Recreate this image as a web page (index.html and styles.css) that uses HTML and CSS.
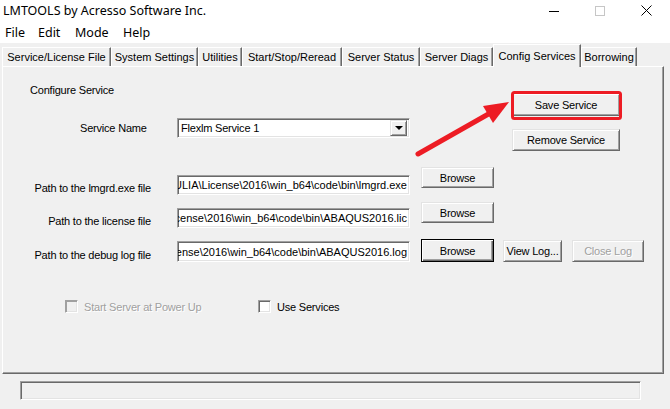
FILE: index.html
```html
<!DOCTYPE html>
<html>
<head>
<meta charset="utf-8">
<title>LMTOOLS</title>
<link rel="stylesheet" href="styles.css">
</head>
<body>
<div class="titlebar">
  <span class="title">LMTOOLS by Acresso Software Inc.</span>
  <div class="wincontrols">
    <span class="wc"><svg width="10" height="10" viewBox="0 0 10 10"><line x1="0" y1="5.5" x2="10" y2="5.5" stroke="#000" stroke-width="1"/></svg></span>
    <span class="wc"><svg width="10" height="10" viewBox="0 0 10 10"><rect x="0.5" y="0.5" width="9" height="9" fill="none" stroke="#c6c6c6" stroke-width="1"/></svg></span>
    <span class="wc"><svg width="11" height="11" viewBox="0 0 11 11"><path d="M0.5 0.5 L10.5 10.5 M10.5 0.5 L0.5 10.5" stroke="#000" stroke-width="1" fill="none"/></svg></span>
  </div>
</div>
<div class="menubar">
  <span class="m m-file">File</span>
  <span class="m m-edit">Edit</span>
  <span class="m m-mode">Mode</span>
  <span class="m">Help</span>
</div>
<div class="tabs">
  <div class="tab t1">Service/License File</div>
  <div class="tab t2">System Settings</div>
  <div class="tab t3">Utilities</div>
  <div class="tab t4">Start/Stop/Reread</div>
  <div class="tab t5">Server Status</div>
  <div class="tab t6">Server Diags</div>
  <div class="tab t7 active">Config Services</div>
  <div class="tab t8">Borrowing</div>
</div>
<div class="panel">
  <div class="top">
    <div class="top-left">
      <div class="heading">Configure Service</div>
      <div class="svc-row">
        <span class="svc-label">Service Name</span>
        <div class="combo field">
          <span class="combo-text">Flexlm Service 1</span>
          <span class="drop"><span class="tri"></span></span>
        </div>
      </div>
    </div>
    <div class="top-right">
      <div class="btn btn-wide save">Save Service</div>
      <div class="btn btn-wide remove">Remove Service</div>
    </div>
  </div>

  <div class="prow r1">
    <span class="plabel">Path to the lmgrd.exe file</span>
    <div class="pinput field"><span>SIMULIA\License\2016\win_b64\code\bin\lmgrd.exe</span></div>
    <div class="btn browse">Browse</div>
  </div>
  <div class="prow r2">
    <span class="plabel">Path to the license file</span>
    <div class="pinput field"><span>License\2016\win_b64\code\bin\ABAQUS2016.lic</span></div>
    <div class="btn browse">Browse</div>
  </div>
  <div class="prow r3">
    <span class="plabel">Path to the debug log file</span>
    <div class="pinput field"><span>License\2016\win_b64\code\bin\ABAQUS2016.log</span></div>
    <div class="btn browse default">Browse</div>
    <div class="btn viewlog">View Log...</div>
    <div class="btn closelog disabled">Close Log</div>
  </div>

  <div class="cbrow">
    <div class="cb cb1"><span class="box box-disabled"></span><span class="disabled-text">Start Server at Power Up</span></div>
    <div class="cb"><span class="box"></span><span>Use Services</span></div>
  </div>
</div>
<div class="statusbar"></div>

<svg class="annot" width="670" height="409" viewBox="0 0 670 409">
  <rect x="512.5" y="92.5" width="108" height="26" rx="2" fill="none" stroke="#ed1c24" stroke-width="3"/>
  <line x1="418" y1="154" x2="492" y2="112" stroke="#ed1c24" stroke-width="5" stroke-linecap="round"/>
  <polygon points="509,102 493,123 483,106" fill="#ed1c24"/>
</svg>
</body>
</html>
```
FILE: styles.css
```css
* { box-sizing: border-box; }
html, body { margin: 0; padding: 0; }
body {
  width: 670px;
  height: 409px;
  overflow: hidden;
  position: relative;
  background: #f0f0f0;
  font-family: "Liberation Sans", Arial, sans-serif;
  font-size: 11px;
  color: #000;
}

.titlebar {
  height: 21px;
  background: #fff;
  display: flex;
  align-items: center;
}
.title {
  font-family: "Noto Sans", sans-serif;
  font-size: 12.5px;
  padding-left: 3px;
}
.wincontrols {
  margin-left: auto;
  display: flex;
  height: 21px;
  padding-right: 1px;
}
.wc {
  width: 46px;
  display: flex;
  align-items: center;
  justify-content: center;
}
.wc svg { display: block; }

.menubar {
  height: 22px;
  background: #fff;
  display: flex;
  align-items: center;
  padding-left: 5px;
  font-family: "Noto Sans", sans-serif;
  font-size: 12.5px;
}
.m-file { width: 33px; }
.m-edit { width: 37px; }
.m-mode { width: 48px; }

.tabs {
  height: 23px;
  display: flex;
  align-items: flex-end;
  padding-left: 2px;
}
.tab {
  height: 19px;
  border-top: 1px solid #fff;
  border-left: 1px solid #fff;
  border-right: 1px solid #696969;
  box-shadow: inset -1px 0 #a0a0a0;
  display: flex;
  align-items: center;
  justify-content: center;
  white-space: nowrap;
  background: #f0f0f0;
}
.tab.active {
  height: 23px;
  margin-bottom: -1px;
  position: relative;
  z-index: 1;
  padding-bottom: 1px;
}
.t1 { width: 109px; }
.t2 { width: 87px; }
.t3 { width: 44px; }
.t4 { width: 100px; }
.t5 { width: 78px; }
.t6 { width: 73px; }
.t7 { width: 88px; }
.t8 { width: 56px; }

.panel {
  margin-left: 2px;
  width: 662px;
  height: 308px;
  border-top: 1px solid #fff;
  border-left: 1px solid #fff;
  border-right: 1px solid #696969;
  border-bottom: 1px solid #696969;
  box-shadow: inset -1px -1px #a0a0a0;
  letter-spacing: -0.2px;
}

.top { display: flex; height: 93px; }
.top-left { width: 509px; }
.heading {
  margin-top: 17px;
  padding-left: 27px;
  line-height: 13px;
}
.svc-row {
  display: flex;
  align-items: center;
  margin-top: 21px;
  padding-left: 77px;
}
.svc-label { width: 97px; }

.field {
  background: #fff;
  border-top: 1px solid #a0a0a0;
  border-left: 1px solid #a0a0a0;
  border-bottom: 1px solid #fff;
  border-right: 1px solid #fff;
  box-shadow: inset 1px 1px #696969, inset -1px -1px #e3e3e3;
}
.combo {
  width: 233px;
  height: 20px;
  display: flex;
  align-items: center;
  padding: 2px 2px 2px 3px;
}
.combo-text { flex: 1; }
.drop {
  width: 17px;
  height: 16px;
  background: #f0f0f0;
  border-top: 1px solid #e3e3e3;
  border-left: 1px solid #e3e3e3;
  border-right: 1px solid #696969;
  border-bottom: 1px solid #696969;
  box-shadow: inset 1px 1px #fff, inset -1px -1px #a0a0a0;
  display: flex;
  align-items: center;
  justify-content: center;
}
.tri {
  width: 0;
  height: 0;
  border-left: 4px solid transparent;
  border-right: 4px solid transparent;
  border-top: 4px solid #000;
}

.top-right { padding-top: 26px; }

.btn {
  background: #f0f0f0;
  border-top: 1px solid #e3e3e3;
  border-left: 1px solid #e3e3e3;
  border-right: 1px solid #696969;
  border-bottom: 1px solid #696969;
  box-shadow: inset 1px 1px #fff, inset -1px -1px #a0a0a0;
  display: flex;
  align-items: center;
  justify-content: center;
  white-space: nowrap;
}
.btn-wide { width: 108px; }
.save { height: 23px; }
.remove { height: 22px; margin-top: 13px; }

.prow { display: flex; }
.plabel {
  width: 148px;
  text-align: right;
  align-self: flex-end;
  line-height: 14px;
  white-space: nowrap;
}
.pinput {
  margin-left: 26px;
  width: 233px;
  height: 20px;
  align-self: flex-end;
  display: flex;
  align-items: center;
  justify-content: flex-end;
  overflow: hidden;
  white-space: nowrap;
  padding-right: 2px;
  letter-spacing: 0;
}
.pinput span { flex: none; }
.browse {
  margin-left: 11px;
  width: 73px;
  height: 21px;
  align-self: flex-start;
}
.r1 { margin-top: 7px; height: 28px; }
.r2 { margin-top: 7px; height: 26px; }
.r3 { margin-top: 11px; height: 23px; }
.r3 .pinput { height: 21px; }
.r3 .browse { height: 23px; }
.default {
  border: 1px solid #000;
  box-shadow: inset 1px 1px #fff, inset -1px -1px #696969, inset -2px -2px #a0a0a0;
}
.viewlog {
  margin-left: 9px;
  width: 59px;
  height: 22px;
  margin-top: 1px;
}
.closelog {
  margin-left: 10px;
  width: 72px;
  height: 22px;
  margin-top: 1px;
}
.disabled, .disabled-text {
  color: #a0a0a0;
  text-shadow: 1px 1px #fff;
}

.cbrow {
  display: flex;
  align-items: center;
  margin-top: 38px;
  padding-left: 62px;
  height: 13px;
}
.cb { display: flex; align-items: center; gap: 6px; }
.cb1 { width: 193px; }
.box {
  width: 13px;
  height: 13px;
  background: #fff;
  border-top: 1px solid #a0a0a0;
  border-left: 1px solid #a0a0a0;
  border-bottom: 1px solid #fff;
  border-right: 1px solid #fff;
  box-shadow: inset 1px 1px #696969, inset -1px -1px #e3e3e3;
}
.box-disabled {
  background: #f0f0f0;
  box-shadow: inset 1px 1px #a0a0a0, inset -1px -1px #e3e3e3;
}

.statusbar {
  margin-top: 7px;
  margin-left: 20px;
  width: 621px;
  height: 19px;
  border-top: 1px solid #a0a0a0;
  border-left: 1px solid #a0a0a0;
  border-bottom: 1px solid #fff;
  border-right: 1px solid #fff;
  box-shadow: inset 1px 1px #696969, inset -1px -1px #e3e3e3;
}

.annot {
  position: absolute;
  left: 0;
  top: 0;
  pointer-events: none;
}
```
